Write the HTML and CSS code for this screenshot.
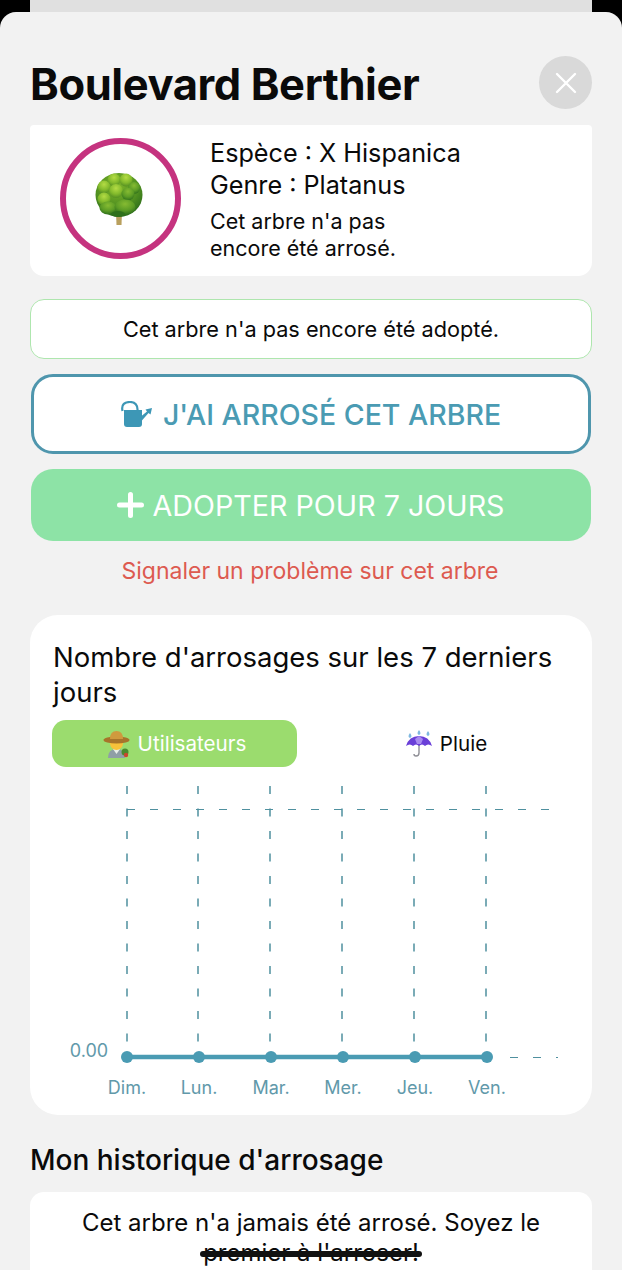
FILE: index.html
```html
<!DOCTYPE html>
<html>

  <head>
    <title>Boulevard Berthier</title>
    <link rel="stylesheet" href="styles.css">
  </head>

  <body>

    <div class="back-card"></div>

    <div class="sheet">

      <div class="header">
        <h1>Boulevard Berthier</h1>
        <div class="close">
          <svg width="24" height="24" viewBox="0 0 24 24">
            <path d="M3 3 L21 21 M21 3 L3 21" stroke="#ffffff" stroke-width="2.4" stroke-linecap="round"></path>
          </svg>
        </div>
      </div>

      <div class="tree-card">
        <div class="tree-ring">
          <svg class="tree-icon" width="50" height="54" viewBox="0 0 50 54">
            <defs>
              <radialGradient id="crown" cx="45%" cy="30%" r="72%">
                <stop offset="0" stop-color="#7fb52a"></stop>
                <stop offset="0.65" stop-color="#4f8f20"></stop>
                <stop offset="1" stop-color="#2a6a1a"></stop>
              </radialGradient>
              <radialGradient id="bump" cx="50%" cy="30%" r="70%">
                <stop offset="0" stop-color="#b4dc45"></stop>
                <stop offset="0.6" stop-color="#83ba2c"></stop>
                <stop offset="1" stop-color="#558f22"></stop>
              </radialGradient>
              <radialGradient id="bump-low" cx="50%" cy="30%" r="70%">
                <stop offset="0" stop-color="#86bb32"></stop>
                <stop offset="0.6" stop-color="#5c9c25"></stop>
                <stop offset="1" stop-color="#2f701b"></stop>
              </radialGradient>
            </defs>
            <path d="M22 40 H28 L27.5 53 H22.5 Z" fill="#b9a05e"></path>
            <ellipse cx="25" cy="23" rx="23.5" ry="22" fill="url(#crown)"></ellipse>
            <circle cx="20" cy="8" r="6.5" fill="url(#bump)"></circle>
            <circle cx="32" cy="8" r="6.5" fill="url(#bump)"></circle>
            <circle cx="10" cy="15" r="6.5" fill="url(#bump)"></circle>
            <circle cx="40" cy="16" r="6" fill="url(#bump-low)"></circle>
            <circle cx="22" cy="19" r="7" fill="url(#bump)"></circle>
            <circle cx="34" cy="22" r="6.5" fill="url(#bump-low)"></circle>
            <circle cx="10" cy="27" r="6.5" fill="url(#bump)"></circle>
            <ellipse cx="14" cy="36" rx="8.5" ry="6.5" fill="url(#bump-low)"></ellipse>
            <ellipse cx="31" cy="35" rx="10.5" ry="7.5" fill="url(#bump-low)"></ellipse>
            <ellipse cx="24" cy="42" rx="7" ry="3" fill="#2f701b"></ellipse>
          </svg>
        </div>
        <div class="tree-info">
          <div class="tree-name">Espèce : X Hispanica</div>
          <div class="tree-name">Genre : Platanus</div>
          <p>Cet arbre n'a pas<br>encore été arrosé.</p>
        </div>
      </div>

      <div class="adopted-box">Cet arbre n'a pas encore été adopté.</div>

      <button class="btn btn-water">
        <svg width="31" height="26" viewBox="0 0 31 26">
          <path d="M1.5 10 C0 3 4 1 9 1 C14 1 17 4 16.5 10" fill="none" stroke="#3d97b6" stroke-width="2.2"></path>
          <path d="M3 9 H21 V23 Q21 26 18 26 H6 Q3 26 3 23 Z" fill="#3d97b6"></path>
          <path d="M20.5 15 L26 10.5 L24.5 8.5 L31 7 L29.5 13.5 L27.5 12 L20.5 20 Z" fill="#3d97b6"></path>
        </svg>
        J'AI ARROSÉ CET ARBRE
      </button>

      <button class="btn btn-adopt">
        <svg width="27" height="26" viewBox="0 0 27 26">
          <path d="M13.5 2.5 V23.5 M2.5 13 H24.5" stroke="#ffffff" stroke-width="5" stroke-linecap="round"></path>
        </svg>
        ADOPTER POUR 7 JOURS
      </button>

      <div class="report">Signaler un problème sur cet arbre</div>

      <div class="chart-card">
        <h2>Nombre d'arrosages sur les 7 derniers jours</h2>

        <div class="tabs">
          <div class="tab tab-active">
            <svg width="27" height="28" viewBox="0 0 27 28">
              <path d="M5 28 Q5 19 13.5 19 Q22 19 22 28 Z" fill="#8f9fa6"></path>
              <path d="M10 19 L13.5 24 L17 19 Z" fill="#e8efe9"></path>
              <circle cx="13.5" cy="13.5" r="6.5" fill="#f8c23a"></circle>
              <ellipse cx="13.5" cy="10" rx="13" ry="3.6" fill="#a8742a"></ellipse>
              <path d="M7 9 Q7 1 13.5 1 Q20 1 20 9 Z" fill="#cf9a3e"></path>
              <circle cx="22" cy="22" r="3.5" fill="#4b8a2e"></circle>
              <circle cx="23" cy="25" r="2.2" fill="#c8452e"></circle>
            </svg>
            Utilisateurs
          </div>
          <div class="tab tab-rain">
            <svg width="26" height="27" viewBox="0 0 26 27">
              <path d="M13 12 V23 Q13 26 10 26 Q8 26 8 24" fill="none" stroke="#8f8f96" stroke-width="1.4"></path>
              <path d="M0 16 Q3 6 13 6 Q23 6 26 16 Q22 13 19 16 Q16 13 13 16 Q10 13 7 16 Q4 13 0 16 Z" fill="#6a3fd8"></path>
              <path d="M9 9 L13 6 L17 9 L15 14 H11 Z" fill="#a98bf0"></path>
              <path d="M4 3 Q1 7 4 8 Q7 7 4 3 Z M13 0 Q10 4 13 5 Q16 4 13 0 Z M22 1 Q19 5 22 6 Q25 5 22 1 Z" fill="#7fb8e0"></path>
            </svg>
            Pluie
          </div>
        </div>

        <svg class="chart" width="562" height="336" viewBox="30 780 562 336">
          <g class="grid">
            <path d="M127 785 V1050"></path>
            <path d="M198 785 V1050"></path>
            <path d="M270 785 V1050"></path>
            <path d="M342 785 V1050"></path>
            <path d="M414 785 V1050"></path>
            <path d="M486 785 V1050"></path>
            <path class="grid-row" d="M127 808.5 H558"></path>
            <path class="grid-row" d="M510 1056.5 H558"></path>
          </g>
          <path class="line" d="M127 1056 H487"></path>
          <g class="dots">
            <circle cx="127" cy="1056" r="6"></circle>
            <circle cx="199" cy="1056" r="6"></circle>
            <circle cx="271" cy="1056" r="6"></circle>
            <circle cx="343" cy="1056" r="6"></circle>
            <circle cx="415" cy="1056" r="6"></circle>
            <circle cx="487" cy="1056" r="6"></circle>
          </g>
          <g class="labels">
            <text x="89" y="1056">0.00</text>
            <text x="127" y="1093">Dim.</text>
            <text x="199" y="1093">Lun.</text>
            <text x="271" y="1093">Mar.</text>
            <text x="343" y="1093">Mer.</text>
            <text x="415" y="1093">Jeu.</text>
            <text x="487" y="1093">Ven.</text>
          </g>
        </svg>
      </div>

      <h3>Mon historique d'arrosage</h3>

      <div class="history-card">
        Cet arbre n'a jamais été arrosé. Soyez le<br>
        <span class="struck">premier à l'arroser!</span>
      </div>

    </div>

  </body>

</html>
```

FILE: styles.css
```css
html, body {
    margin: 0;
    padding: 0;
    height: 1270px;
    overflow: hidden;
    background-color: #000000;
    font-family: "Inter", "Liberation Sans", sans-serif;
    color: #0a0a0a;
}

.back-card {
    height: 12px;
    margin: 0 30px;
    background-color: #e0e0e0;
}

.sheet {
    height: 1258px;
    box-sizing: border-box;
    padding: 44px 30px 0;
    background-color: #f2f2f2;
    border-radius: 16px 16px 0 0;
}

.header {
    display: flex;
    align-items: center;
    justify-content: space-between;
    height: 53px;
    margin-bottom: 16px;
}

h1 {
    margin: 2px 0 0 0;
    font-size: 43.5px;
    font-weight: 700;
    letter-spacing: -0.4px;
}

.close {
    width: 53px;
    height: 53px;
    border-radius: 50%;
    background-color: #d9d9d9;
    display: flex;
    align-items: center;
    justify-content: center;
}

.tree-card {
    display: flex;
    align-items: center;
    height: 151px;
    background-color: #ffffff;
    border-radius: 4px 4px 14px 14px;
}

.tree-ring {
    box-sizing: border-box;
    width: 121px;
    height: 121px;
    margin: 0 29px 4px 30px;
    border: 6px solid #c5337f;
    border-radius: 50%;
    display: flex;
    align-items: center;
    justify-content: center;
}

.tree-icon {
    margin-right: 4px;
}

.tree-info {
    margin-bottom: 3px;
}

.tree-name {
    font-size: 25.2px;
    line-height: 32px;
}

.tree-info p {
    margin: 7px 0 0;
    font-size: 21.5px;
    line-height: 27px;
}

.adopted-box {
    box-sizing: border-box;
    height: 60px;
    margin-top: 23px;
    background-color: #ffffff;
    border: 1.5px solid #aee6ae;
    border-radius: 14px;
    font-size: 21.7px;
    display: flex;
    align-items: center;
    justify-content: center;
}

.btn {
    box-sizing: border-box;
    width: 560px;
    margin-left: 1px;
    display: flex;
    align-items: center;
    justify-content: center;
    font-family: inherit;
    padding: 0;
}

.btn-water {
    height: 80px;
    margin-top: 15px;
    gap: 11px;
    font-size: 28.5px;
    font-weight: 500;
    background-color: #ffffff;
    color: #4a9bb3;
    border: 3px solid #4f96ad;
    border-radius: 22px;
}

.btn-adopt {
    height: 72px;
    margin-top: 15px;
    gap: 8px;
    font-size: 28.7px;
    font-weight: 400;
    background-color: #8de3a6;
    color: #ffffff;
    border: none;
    border-radius: 22px;
}

.report {
    margin-top: 15px;
    padding-right: 2px;
    font-size: 23px;
    line-height: 30px;
    text-align: center;
    color: #dd5a50;
}

.chart-card {
    margin-top: 29px;
    height: 500px;
    background-color: #ffffff;
    border-radius: 28px;
    overflow: hidden;
}

h2 {
    margin: 0;
    padding: 25px 22px 0 23px;
    font-size: 27.5px;
    line-height: 35px;
    font-weight: 400;
}

.tabs {
    display: flex;
    margin: 10px 22px 0;
    height: 47px;
}

.tab {
    display: flex;
    align-items: center;
    justify-content: center;
    gap: 8px;
    font-size: 20.6px;
}

.tab-active {
    width: 245px;
    background-color: #9bdc6e;
    color: #ffffff;
    border-radius: 14px;
}

.tab-rain {
    flex: 1;
    padding-left: 26px;
}

.chart {
    display: block;
    margin-top: 14px;
}

.grid path {
    fill: none;
    stroke: #4f909f;
    stroke-width: 1.5;
    stroke-dasharray: 8 14.5;
}

.grid .grid-row {
    stroke-width: 1;
    stroke-dasharray: 8 15;
}

.line {
    fill: none;
    stroke: #4a9bb3;
    stroke-width: 4.5;
}

.dots circle {
    fill: #4a9bb3;
}

.labels text {
    font-size: 18px;
    fill: #6199aa;
    text-anchor: middle;
}

h3 {
    margin: 27px 0 0 0;
    font-size: 28px;
    line-height: 36px;
    font-weight: 500;
}

.history-card {
    margin-top: 14px;
    height: 120px;
    padding-top: 16px;
    box-sizing: border-box;
    background-color: #ffffff;
    border-radius: 14px;
    font-size: 24px;
    line-height: 30px;
    text-align: center;
}

.struck {
    position: relative;
    display: inline-block;
}

.struck::after {
    content: "";
    position: absolute;
    left: -3px;
    right: -3px;
    top: 13px;
    height: 6px;
    background-color: #111111;
    border-radius: 3px;
}
```
